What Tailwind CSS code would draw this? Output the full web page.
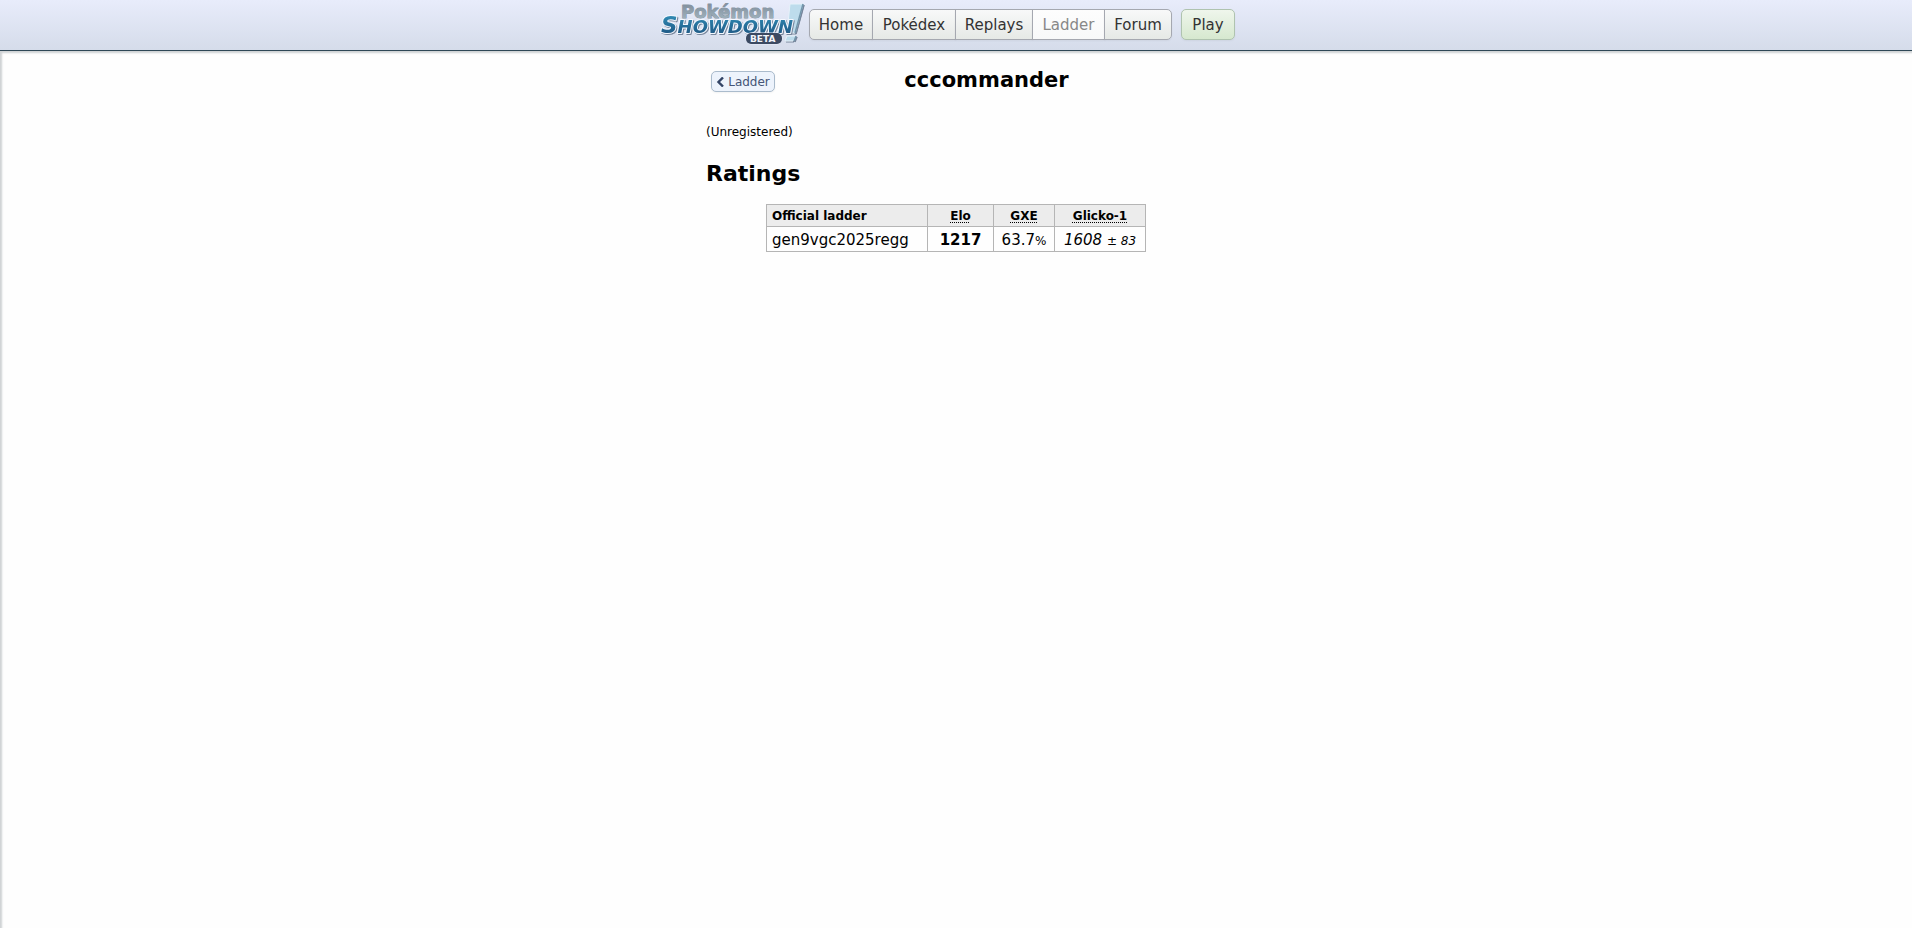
<!DOCTYPE html>
<html lang="en">
<head>
  <meta charset="UTF-8">
  <meta name="viewport" content="width=device-width, initial-scale=1.0">
  <title>cccommander - Pokémon Showdown!</title>
  <script src="https://cdn.jsdelivr.net/npm/@tailwindcss/browser@4"></script>
</head>
<body class="min-h-screen flex flex-col bg-[#fefefe] text-black text-xs font-['Verdana','DejaVu_Sans',sans-serif]">

<header class="bg-linear-to-b from-[#e8ecfb] to-[#d5dcea] border-b border-[#2f4756]">
  <div class="mx-auto max-w-[592px] h-[50px] flex items-start">
    <a href="/" aria-label="Pokémon Showdown! beta" class="shrink-0">
      <svg width="146" height="48" viewBox="0 0 146 48">
        <defs>
          <linearGradient id="blue" x1="0" y1="0" x2="0" y2="1">
            <stop offset="0.2" stop-color="#2f86b0"/>
            <stop offset="1" stop-color="#1c4f7c"/>
          </linearGradient>
          <linearGradient id="grey" x1="0" y1="0" x2="0" y2="1">
            <stop offset="0.2" stop-color="#8492a0"/>
            <stop offset="1" stop-color="#a4b8c2"/>
          </linearGradient>
          <filter id="shade" x="-10%" y="-20%" width="120%" height="150%">
            <feDropShadow dx="1" dy="1" stdDeviation="0.5" flood-color="#77869c"/>
          </filter>
        </defs>
        <!-- exclamation mark -->
        <g filter="url(#shade)">
          <path d="M130 4L143 4L135 33L127 33Z M127 36L136 36L133 41L125 41Z" fill="#bddcec" stroke="#e6f1f9" stroke-width="1"/>
          <path d="M143 4L135 33M136 36L134 41" fill="none" stroke="#7297ad" stroke-width="1.5"/>
        </g>
        <g font-family="Verdana, 'DejaVu Sans', sans-serif" font-weight="bold" stroke-linejoin="round" paint-order="stroke">
          <text x="21" y="18" font-size="18" fill="url(#grey)" stroke="#8795a2" stroke-width="1">Pokémon</text>
          <text x="1" y="33" font-size="23" font-style="italic" fill="url(#blue)" stroke="#f4f8ff" stroke-width="2" filter="url(#shade)">S<tspan font-size="18">HOWDOWN</tspan></text>
          <rect x="86" y="33" width="36" height="11" rx="5" fill="#3c4a62" stroke="#e9eefa"/>
          <text x="90" y="42" font-size="9" fill="#f2f5fb">BETA</text>
        </g>
      </svg>
    </a>
    <nav class="ml-[3px] mt-[9px] flex text-[15px] leading-[28px] text-center text-[#333333] whitespace-nowrap">
      <a href="/" class="w-[64px] pt-px border border-[#a5a8b0] rounded-l-[5px] bg-linear-to-b from-[#f8f9f9] to-[#e6e9e6] shadow-xs">Home</a>
      <a href="/dex" class="w-[84px] pt-px -ml-px border border-[#a5a8b0] bg-linear-to-b from-[#f8f9f9] to-[#e6e9e6] shadow-xs">Pokédex</a>
      <a href="/replays" class="w-[78px] pt-px -ml-px border border-[#a5a8b0] bg-linear-to-b from-[#f8f9f9] to-[#e6e9e6] shadow-xs">Replays</a>
      <a href="/ladder" class="w-[73px] pt-px -ml-px border border-[#a5a8b0] bg-linear-to-b from-[#fdfdfd] to-[#f8f9f9] text-[#888888] shadow-xs">Ladder</a>
      <a href="/forums" class="w-[68px] pt-px -ml-px border border-[#a5a8b0] rounded-r-[5px] bg-linear-to-b from-[#f8f9f9] to-[#e6e9e6] shadow-xs">Forum</a>
      <a href="/play" class="w-[54px] pt-px ml-[9px] border border-[#afc3af] rounded-[5px] bg-linear-to-b from-[#eff6ec] to-[#d6e8cf] shadow-xs">Play</a>
    </nav>
  </div>
</header>

<main class="grow shadow-[inset_2px_2px_2px_#cfd2d4]">
  <div class="mx-auto max-w-[500px]">
    <div class="flex items-start pt-4 pr-2">
      <a href="/ladder" class="ml-[5px] mt-1 w-[64px] pt-px flex items-center justify-center gap-1 border border-[#aabbcc] rounded-[5px] bg-[#edf3fc] leading-[18px] text-[#445577] shadow-xs">
        <svg width="8" height="10" viewBox="0 0 8 10"><path d="M7 0.5L2.5 5L7 9.5" fill="none" stroke="#334466" stroke-width="2.4"/></svg>
        Ladder
      </a>
      <h1 class="grow text-center text-[21px] leading-[26px] font-bold">cccommander</h1>
    </div>
    <p class="mt-[30px] leading-[18px]">(Unregistered)</p>
    <h2 class="mt-5 text-[22px] leading-[26px] font-bold">Ratings</h2>
    <table class="mt-[17px] mx-auto w-[380px] table-fixed border-collapse">
      <thead>
      <tr class="h-[22px] bg-[#ececec] leading-[18px]">
        <th class="w-[161px] border border-[#b5b5b5] px-[5px] text-left">Official ladder</th>
        <th class="w-[66px] border border-[#b5b5b5]"><abbr title="Elo rating" class="underline decoration-dotted underline-offset-2">Elo</abbr></th>
        <th class="w-[61px] border border-[#b5b5b5]"><abbr title="Estimated win chance" class="underline decoration-dotted underline-offset-2">GXE</abbr></th>
        <th class="border border-[#b5b5b5]"><abbr title="Glicko-1 rating" class="underline decoration-dotted underline-offset-2">Glicko-1</abbr></th>
      </tr>
      </thead>
      <tbody>
      <tr class="h-[25px] text-[15px] leading-[20px] text-center whitespace-nowrap">
        <td class="border border-[#b5b5b5] px-[5px] pt-px text-left">gen9vgc2025regg</td>
        <td class="border border-[#b5b5b5] pt-px font-bold">1217</td>
        <td class="border border-[#b5b5b5] pt-px">63.7<small class="text-xs">%</small></td>
        <td class="border border-[#b5b5b5] pt-px italic">1608 <small class="text-xs">± 83</small></td>
      </tr>
      </tbody>
    </table>
  </div>
</main>
</body>
</html>
